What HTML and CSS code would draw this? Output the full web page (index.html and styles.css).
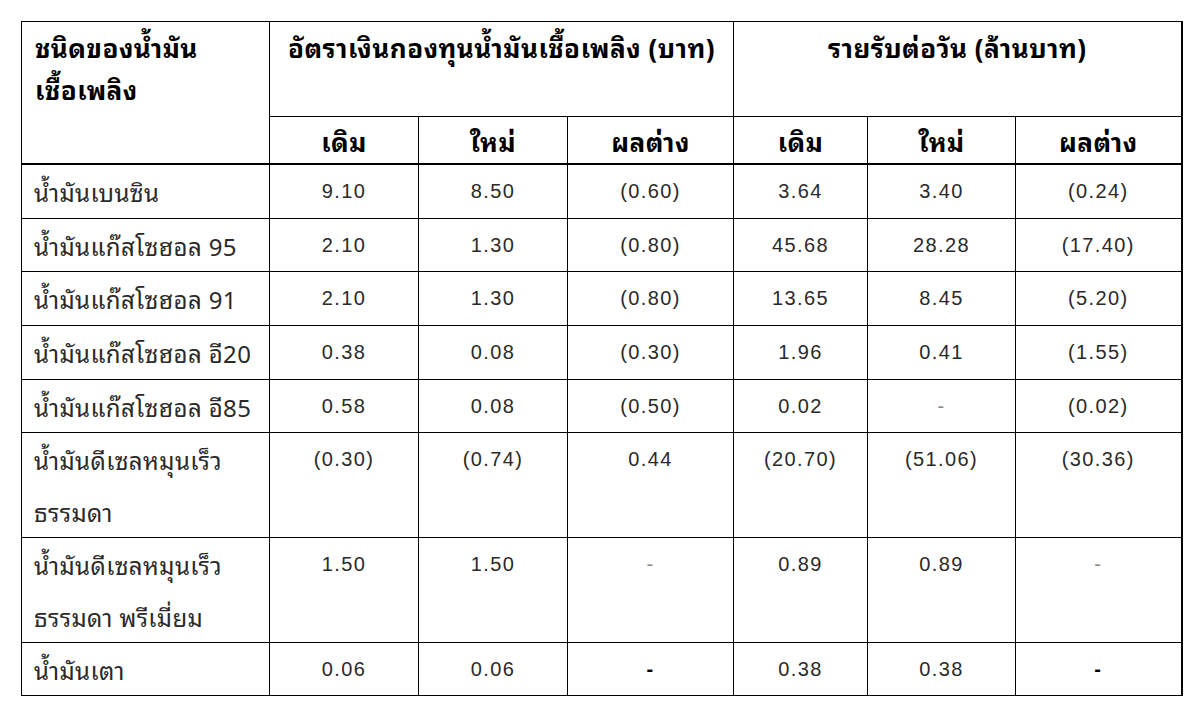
FILE: index.html
```html
<!DOCTYPE html>
<html lang="th">
<head>
<meta charset="utf-8">
<title>อัตราเงินกองทุนน้ำมันเชื้อเพลิง</title>
<link rel="stylesheet" href="styles.css">
</head>
<body>
<table class="fund">
  <colgroup>
    <col class="c-name">
    <col class="c-a">
    <col class="c-b">
    <col class="c-c">
    <col class="c-d">
    <col class="c-e">
    <col class="c-f">
  </colgroup>
  <thead>
    <tr class="h1">
      <th class="th-name" rowspan="2">ชนิดของน้ำมัน<br>เชื้อเพลิง</th>
      <th colspan="3">อัตราเงินกองทุนน้ำมันเชื้อเพลิง (บาท)</th>
      <th colspan="3">รายรับต่อวัน (ล้านบาท)</th>
    </tr>
    <tr class="h2">
      <th>เดิม</th><th>ใหม่</th><th>ผลต่าง</th>
      <th>เดิม</th><th>ใหม่</th><th>ผลต่าง</th>
    </tr>
  </thead>
  <tbody>
    <tr class="r54 first">
      <td class="name">น้ำมันเบนซิน</td>
      <td>9.10</td><td>8.50</td><td>(0.60)</td><td>3.64</td><td>3.40</td><td>(0.24)</td>
    </tr>
    <tr class="r52">
      <td class="name">น้ำมันแก๊สโซฮอล 95</td>
      <td>2.10</td><td>1.30</td><td>(0.80)</td><td>45.68</td><td>28.28</td><td>(17.40)</td>
    </tr>
    <tr class="r54">
      <td class="name">น้ำมันแก๊สโซฮอล 91</td>
      <td>2.10</td><td>1.30</td><td>(0.80)</td><td>13.65</td><td>8.45</td><td>(5.20)</td>
    </tr>
    <tr class="r54">
      <td class="name">น้ำมันแก๊สโซฮอล อี20</td>
      <td>0.38</td><td>0.08</td><td>(0.30)</td><td>1.96</td><td>0.41</td><td>(1.55)</td>
    </tr>
    <tr class="r52">
      <td class="name">น้ำมันแก๊สโซฮอล อี85</td>
      <td>0.58</td><td>0.08</td><td>(0.50)</td><td>0.02</td><td class="dash">-</td><td>(0.02)</td>
    </tr>
    <tr class="r105">
      <td class="name">น้ำมันดีเซลหมุนเร็ว<br>ธรรมดา</td>
      <td>(0.30)</td><td>(0.74)</td><td>0.44</td><td>(20.70)</td><td>(51.06)</td><td>(30.36)</td>
    </tr>
    <tr class="r105">
      <td class="name">น้ำมันดีเซลหมุนเร็ว<br>ธรรมดา พรีเมี่ยม</td>
      <td>1.50</td><td>1.50</td><td class="dash">-</td><td>0.89</td><td>0.89</td><td class="dash">-</td>
    </tr>
    <tr class="r53">
      <td class="name">น้ำมันเตา</td>
      <td>0.06</td><td>0.06</td><td class="dash bold">-</td><td>0.38</td><td>0.38</td><td class="dash bold">-</td>
    </tr>
  </tbody>
</table>
</body>
</html>
```
FILE: styles.css
```css
html, body {
  margin: 0;
  padding: 0;
  background: #ffffff;
}

body {
  padding: 21px 0 0 21px;
}

.fund {
  border-collapse: collapse;
  table-layout: fixed;
  width: 1160px;
  font-family: "Liberation Sans", Arial, sans-serif;
  font-size: 20px;
  letter-spacing: 1.4px;
  color: #2a2a2a;
}

.c-name { width: 248px; }
.c-a { width: 149px; }
.c-b { width: 149px; }
.c-c { width: 166px; }
.c-d { width: 134px; }
.c-e { width: 148px; }
.c-f { width: 166px; }

.fund th,
.fund td {
  border: 1px solid #000;
  padding: 0;
  text-align: center;
  vertical-align: top;
}

.fund th {
  font-family: "Noto Sans Thai Looped", "Loma", "Garuda", "Tlwg Typo", "Kinnari", "Noto Sans Thai", sans-serif;
  font-weight: bold;
  color: #000;
  font-size: 26px;
  letter-spacing: 0.5px;
}

.h1 {
  height: 95px;
}

.h1 th {
  line-height: 42px;
  padding-top: 3px;
}

.h1 .th-name {
  text-align: left;
  padding-left: 13px;
}

.h2 {
  height: 47px;
}

.h2 th {
  line-height: 46px;
  vertical-align: middle;
}

.fund tbody td {
  line-height: 52px;
  padding-top: 0;
}

.fund tbody tr.first td {
  border-top: 2px solid #000;
}

.fund td.name {
  text-align: left;
  padding-left: 12px;
  font-family: "Noto Sans Thai Looped", "Loma", "Garuda", "Tlwg Typo", "Kinnari", "Noto Sans Thai", sans-serif;
  font-size: 24px;
  letter-spacing: 0.4px;
  white-space: nowrap;
}

.fund td:last-child,
.fund th:last-child {
  border-right: 2px solid #000;
}

.r54 { height: 54px; }
.r52 { height: 52px; }
.r53 { height: 53px; }
.r105 { height: 105px; }

.dash {
  color: #888;
}

.dash.bold {
  color: #000;
  font-weight: bold;
}
```
